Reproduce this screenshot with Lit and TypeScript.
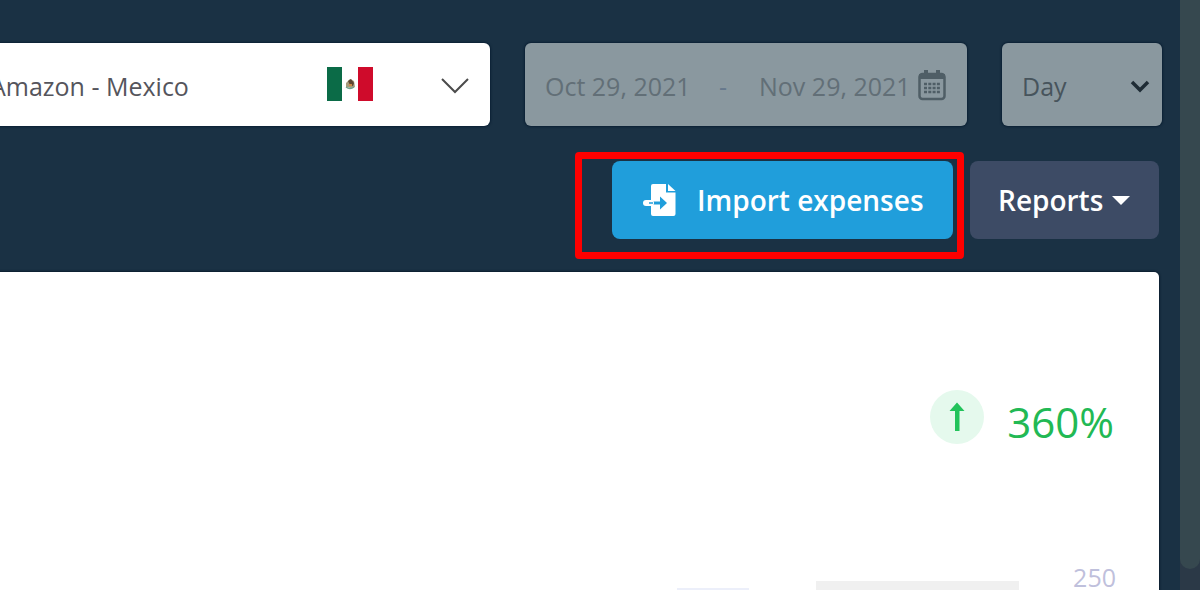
import { LitElement, html, css } from "lit";
import { customElement } from "lit/decorators.js";

@customElement("app-root")
export class AppRoot extends LitElement {
  static styles = css`
    :host {
      display: block;
      font-family: "Open Sans", "Noto Sans", sans-serif;
      color: #4a4a50;
    }
    * {
      box-sizing: border-box;
    }
    .page {
      display: flex;
      height: 100vh;
      overflow: hidden;
      background: #1a3144;
    }
    .content {
      flex: 1;
      min-width: 0;
      display: flex;
      flex-direction: column;
      padding-top: 43px;
    }
    .filters {
      display: flex;
      gap: 35px;
      height: 83px;
      margin: 0 18px 0 -40px;
    }
    .field {
      border-radius: 6px;
      border: 0;
      box-shadow: 0 0 2px 1px #0b2034;
      font-family: inherit;
      font-size: 25px;
      font-weight: 400;
    }
    .store {
      flex: 1;
      display: flex;
      align-items: center;
      padding: 2px 21px 0 30px;
      background: #fff;
      color: #55555c;
      text-align: left;
    }
    .store-name {
      flex: 1;
    }
    .flag {
      display: block;
      width: 46px;
      height: 34px;
      margin: 0 68px 4px 0;
    }
    .chevron {
      width: 28px;
      height: 18px;
    }
    .range {
      width: 442px;
      display: flex;
      align-items: center;
      padding: 0 20px;
      background: #8a989f;
      color: #626f77;
    }
    .date {
      width: 152px;
      padding: 2px 0 0;
      border: 0;
      background: none;
      color: inherit;
      font: inherit;
    }
    .dash {
      width: 62px;
      padding: 2px 0 0 22px;
      color: #66788c;
    }
    .calendar {
      width: 28px;
      height: 32px;
      margin-left: 7px;
    }
    .period {
      position: relative;
      width: 160px;
      display: flex;
    }
    .select {
      width: 100%;
      appearance: none;
      padding: 2px 20px 0;
      background: #8a989f;
      color: #47545c;
    }
    .caret {
      position: absolute;
      right: 11px;
      top: 35px;
      width: 22px;
      height: 16px;
      pointer-events: none;
    }
    .actions {
      display: flex;
      justify-content: flex-end;
      align-items: flex-start;
      gap: 6px;
      margin: 26px 21px 13px 0;
    }
    .highlight {
      padding: 2px 4px 13px 30px;
      border: 7px solid #fe0000;
      border-radius: 4px;
    }
    .btn {
      display: flex;
      align-items: center;
      height: 78px;
      border: 0;
      border-radius: 8px;
      color: #fff;
      font-family: inherit;
      font-size: 28px;
      font-weight: 600;
      white-space: nowrap;
    }
    .import {
      width: 341px;
      gap: 20px;
      padding: 0 0 0 31px;
      background: #209edb;
    }
    .import-icon {
      width: 34px;
      height: 34px;
    }
    .reports {
      width: 189px;
      gap: 8px;
      margin-top: 9px;
      padding: 0 0 0 28px;
      background: #3d4b65;
    }
    .triangle {
      width: 20px;
      height: 12px;
    }
    .card {
      flex: 1;
      display: flex;
      flex-direction: column;
      justify-content: space-between;
      margin-right: 21px;
      border-radius: 0 5px 0 0;
      box-shadow: 0 0 2px 1px #0b1c2e;
      background: #fff;
    }
    .change {
      display: flex;
      justify-content: flex-end;
      align-items: flex-start;
      gap: 23px;
      padding: 118px 45px 0 0;
    }
    .badge {
      width: 54px;
      height: 54px;
    }
    .percent {
      padding-top: 5px;
      color: #22b954;
      font-size: 42px;
      line-height: 54px;
    }
    .chart {
      display: flex;
      justify-content: flex-end;
      align-items: flex-end;
      padding-right: 43px;
    }
    .series {
      width: 72px;
      height: 2px;
      margin-right: 67px;
      background: #eceffa;
    }
    .bar {
      width: 203px;
      height: 9px;
      margin-right: 54px;
      background: #f0f0f0;
    }
    .tick {
      height: 28px;
      color: #bfc0dc;
      font-size: 25px;
      line-height: 30px;
    }
    .scroll {
      width: 20px;
      background: #2b3947;
    }
    .thumb {
      height: 96.5%;
      border-radius: 0 0 10px 10px;
      background: #36484f;
    }
  `;

  render() {
    return html`
      <div class="page">
        <main class="content">
          <div class="filters">
            <button class="field store" type="button" aria-haspopup="listbox">
              <span class="store-name">Amazon - Mexico</span>
              <svg class="flag" viewBox="0 0 46 34" aria-hidden="true">
                <path fill="#fff" d="M0 0h46v34H0z" />
                <path fill="#0b6b47" d="M0 0h15v34H0z" />
                <path fill="#cf0b2b" d="M31 0h15v34H31z" />
                <path fill="#a79a7c" d="M19 16l4-4 4 2 1 6-4 1-5-1z" />
                <path fill="#5c4632" d="M21 14l3-2 3 4-1 3-3-1z" />
                <path d="M19 20q4 3 8 0" fill="none" stroke="#6fa08c" stroke-width="1.5" />
                <path fill="#c98b45" d="M22 17h3v2h-3z" />
              </svg>
              <svg class="chevron" viewBox="0 0 28 18" fill="none" stroke="#4b4b4b" stroke-width="2" aria-hidden="true">
                <path d="M1 2l13 13L27 2" />
              </svg>
            </button>
            <div class="field range">
              <input class="date" type="text" aria-label="Start date" value="Oct 29, 2021" />
              <span class="dash">-</span>
              <input class="date" type="text" aria-label="End date" value="Nov 29, 2021" />
              <svg class="calendar" viewBox="0 0 28 32" fill="none" stroke="#4f5e66" aria-hidden="true">
                <rect x="1.5" y="5" width="25" height="25" rx="3" stroke-width="2.5" />
                <path d="M1 5h26v5H1z" fill="#4f5e66" stroke="none" />
                <path d="M8 1v5M20 1v5" stroke-width="4" />
                <path d="M6 15h16M6 19h16M6 23h16" stroke-width="2.5" stroke-dasharray="3 1.3" />
              </svg>
            </div>
            <div class="period">
              <select class="field select" aria-label="Period">
                <option>Day</option>
                <option>Week</option>
                <option>Month</option>
              </select>
              <svg class="caret" viewBox="0 0 22 16" fill="none" stroke="#1f2c35" stroke-width="3.5" aria-hidden="true">
                <path d="M3 4l8 8 8-8" />
              </svg>
            </div>
          </div>
          <div class="actions">
            <div class="highlight">
              <button class="btn import" type="button">
                <svg class="import-icon" viewBox="0 0 34 34" aria-hidden="true">
                  <path fill="#fff" d="M10 1h13v8.500h9.500V31a2 2 0 0 1-2 2H10a2 2 0 0 1-2-2V3a2 2 0 0 1 2-2z" />
                  <path fill="#fff" d="M25 1l7.500 7H25z" />
                  <path d="M9 20h9" stroke="#209edb" stroke-width="3" />
                  <path fill="#209edb" d="M17 13.500l7 6.500-7 6.500z" />
                  <path d="M3 20h5" stroke="#fff" stroke-width="6" stroke-linecap="round" />
                  <path d="M6 20h4" stroke="#209edb" stroke-width="1.500" />
                </svg>
                <span>Import expenses</span>
              </button>
            </div>
            <button class="btn reports" type="button" aria-haspopup="menu">
              <span>Reports</span>
              <svg class="triangle" viewBox="0 0 20 12" aria-hidden="true">
                <path fill="#fff" d="M1 2h18l-9 9z" />
              </svg>
            </button>
          </div>
          <section class="card">
            <div class="change">
              <svg class="badge" viewBox="0 0 54 54" aria-hidden="true">
                <circle cx="27" cy="27" r="27" fill="#e5f9ed" />
                <path fill="#22c35b" d="M25 41V21h-5.500l7.500-8.500L34.500 21H29.500v20z" />
              </svg>
              <span class="percent">360%</span>
            </div>
            <div class="chart">
              <div class="series"></div>
              <div class="bar"></div>
              <span class="tick">250</span>
            </div>
          </section>
        </main>
        <div class="scroll"><div class="thumb"></div></div>
      </div>
    `;
  }
}
